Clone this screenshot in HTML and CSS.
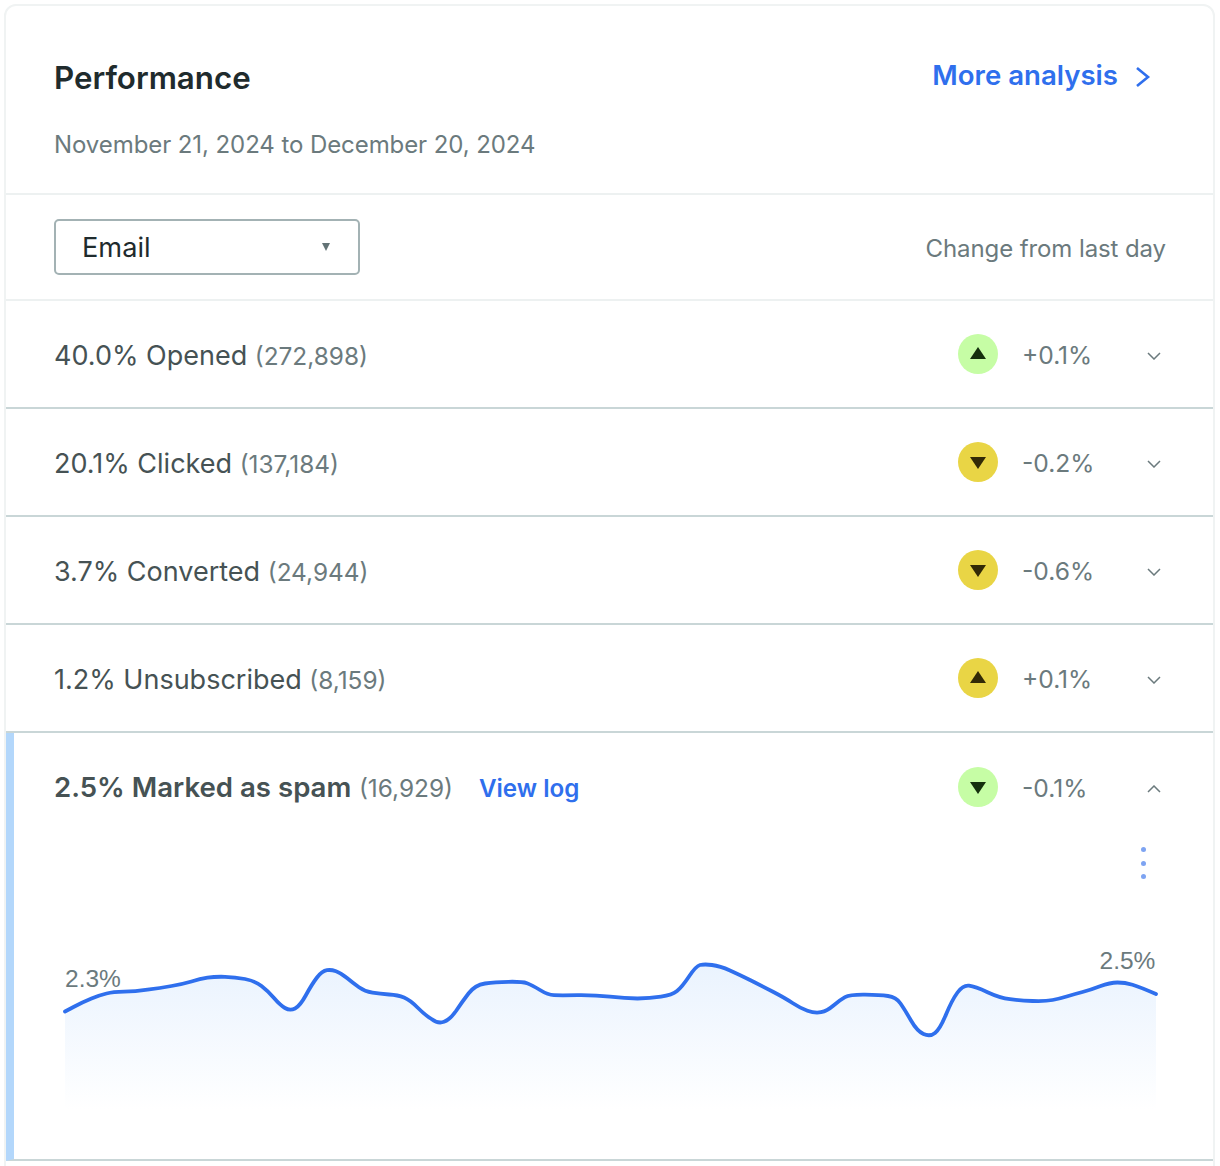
FILE: index.html
```html
<!DOCTYPE html>
<html lang="en">
<head>
<meta charset="utf-8">
<title>Performance</title>
<link rel="stylesheet" href="styles.css">
</head>
<body>
<section class="card">
  <header class="head">
    <div>
      <h1 class="title">Performance</h1>
      <p class="range">November 21, 2024 to December 20, 2024</p>
    </div>
    <a class="more" href="#">More analysis
      <svg class="more-icon" viewBox="0 0 16 22"><path d="M2 2l11 9-11 9"/></svg>
    </a>
  </header>
  <div class="filter">
    <div class="select"><span class="select-text">Email</span><svg class="select-arrow" viewBox="0 0 8 8"><path d="M0 0h8L4 8z"/></svg></div>
    <span class="filter-note">Change from last day</span>
  </div>
  <div class="row">
    <div class="label">40.0% Opened <span class="count">(272,898)</span></div>
    <span class="badge good"><svg class="up" viewBox="0 0 16 12"><path d="M8 0l8 12H0z"/></svg></span>
    <span class="delta">+0.1%</span>
    <svg class="chev" viewBox="0 0 14 8"><path d="M1 1l6 6 6-6"/></svg>
  </div>
  <div class="row">
    <div class="label">20.1% Clicked <span class="count">(137,184)</span></div>
    <span class="badge warn"><svg class="down" viewBox="0 0 16 12"><path d="M0 0h16L8 12z"/></svg></span>
    <span class="delta">-0.2%</span>
    <svg class="chev" viewBox="0 0 14 8"><path d="M1 1l6 6 6-6"/></svg>
  </div>
  <div class="row">
    <div class="label">3.7% Converted <span class="count">(24,944)</span></div>
    <span class="badge warn"><svg class="down" viewBox="0 0 16 12"><path d="M0 0h16L8 12z"/></svg></span>
    <span class="delta">-0.6%</span>
    <svg class="chev" viewBox="0 0 14 8"><path d="M1 1l6 6 6-6"/></svg>
  </div>
  <div class="row">
    <div class="label">1.2% Unsubscribed <span class="count">(8,159)</span></div>
    <span class="badge warn"><svg class="up" viewBox="0 0 16 12"><path d="M8 0l8 12H0z"/></svg></span>
    <span class="delta">+0.1%</span>
    <svg class="chev" viewBox="0 0 14 8"><path d="M1 1l6 6 6-6"/></svg>
  </div>
  <div class="expanded">
    <div class="row row-open">
      <div class="label"><strong class="strong">2.5% Marked as spam</strong> <span class="count">(16,929)</span><a class="log" href="#">View log</a></div>
      <span class="badge good"><svg class="down" viewBox="0 0 16 12"><path d="M0 0h16L8 12z"/></svg></span>
      <span class="delta">-0.1%</span>
      <svg class="chev" viewBox="0 0 14 8"><path d="M1 7l6-6 6 6"/></svg>
    </div>
    <div class="menu-line"><span class="dots"><i></i><i></i><i></i></span></div>
    <svg class="chart" viewBox="14 900 1200 259">
      <defs>
        <linearGradient id="fade" gradientUnits="userSpaceOnUse" x1="0" y1="965" x2="0" y2="1110">
          <stop class="stop-a" offset="0"/>
          <stop class="stop-b" offset="1"/>
        </linearGradient>
      </defs>
      <path class="area" d="M65 1011.5L74 1006.7Q83 1002 91.5 998.5Q100 995 106.5 993.5Q113 992 124 991.7Q135 991.5 147.5 989.7Q160 988 171.5 986Q183 984 191.5 981.5Q200 979 207.5 977.7Q215 976.5 225 976.8Q235 977 245 979Q255 981 261.5 986Q268 991 274 998Q280 1005 285 1008Q290 1011 295 1008.5Q300 1006 306 995Q312 984 317 977.5Q322 971 327 970.2Q331 969.5 336 971.2Q341 973 347 978Q353 983 359 987.2Q365 991.5 372.5 992.7Q380 994 389 994.5Q398 995 404 997.5Q410 1000 417.5 1007.5Q425 1015 431.5 1019Q438 1024 444 1021.8Q450 1019.5 456 1011Q462 1002 468.5 993.5Q475 985 485 983.5Q495 982 508.5 981.8Q522 981.5 527 983.2Q532 985 540 990Q548 995 554 995.2Q560 995.5 577.5 995.2Q595 995 610 996.7Q625 998.5 637.5 998.5Q650 998.5 661 996.7Q672 995 677 991Q682 987 689 976.5Q696 966 700 965Q705 964 712 965Q720 966 730 970.5Q740 975 750 980Q760 985 772.5 991.5Q785 998 792.5 1003Q800 1008 807.5 1010.7Q815 1013.5 821 1012.2Q827 1011 833.5 1005.5Q840 1000 845 997.2Q850 994.5 865 994.7Q880 995 888 996Q896 997 900.5 1003.5Q905 1010 911 1020.5Q917 1031 923.5 1034Q930 1037 935 1033Q940 1029 946 1014.5Q952 1000 957.5 992.5Q963 985 969 985.7Q975 986.5 987.5 992.2Q1000 998 1010 999.2Q1020 1000.5 1032.5 1001Q1045 1001.5 1052.5 1000Q1060 998.5 1067.5 996.2Q1075 994 1082.5 992Q1090 990 1100 986.2Q1110 982.5 1117.5 982.5Q1125 982.5 1132.5 984.7Q1140 987 1156 994L1156 1110L65 1110Z"/>
      <path class="line" d="M65 1011.5L74 1006.7Q83 1002 91.5 998.5Q100 995 106.5 993.5Q113 992 124 991.7Q135 991.5 147.5 989.7Q160 988 171.5 986Q183 984 191.5 981.5Q200 979 207.5 977.7Q215 976.5 225 976.8Q235 977 245 979Q255 981 261.5 986Q268 991 274 998Q280 1005 285 1008Q290 1011 295 1008.5Q300 1006 306 995Q312 984 317 977.5Q322 971 327 970.2Q331 969.5 336 971.2Q341 973 347 978Q353 983 359 987.2Q365 991.5 372.5 992.7Q380 994 389 994.5Q398 995 404 997.5Q410 1000 417.5 1007.5Q425 1015 431.5 1019Q438 1024 444 1021.8Q450 1019.5 456 1011Q462 1002 468.5 993.5Q475 985 485 983.5Q495 982 508.5 981.8Q522 981.5 527 983.2Q532 985 540 990Q548 995 554 995.2Q560 995.5 577.5 995.2Q595 995 610 996.7Q625 998.5 637.5 998.5Q650 998.5 661 996.7Q672 995 677 991Q682 987 689 976.5Q696 966 700 965Q705 964 712 965Q720 966 730 970.5Q740 975 750 980Q760 985 772.5 991.5Q785 998 792.5 1003Q800 1008 807.5 1010.7Q815 1013.5 821 1012.2Q827 1011 833.5 1005.5Q840 1000 845 997.2Q850 994.5 865 994.7Q880 995 888 996Q896 997 900.5 1003.5Q905 1010 911 1020.5Q917 1031 923.5 1034Q930 1037 935 1033Q940 1029 946 1014.5Q952 1000 957.5 992.5Q963 985 969 985.7Q975 986.5 987.5 992.2Q1000 998 1010 999.2Q1020 1000.5 1032.5 1001Q1045 1001.5 1052.5 1000Q1060 998.5 1067.5 996.2Q1075 994 1082.5 992Q1090 990 1100 986.2Q1110 982.5 1117.5 982.5Q1125 982.5 1132.5 984.7Q1140 987 1156 994"/>
      <text class="point" x="65" y="987">2.3%</text>
      <text class="point" x="1099.5" y="969">2.5%</text>
    </svg>
  </div>
</section>
</body>
</html>
```

FILE: styles.css
```css
* { box-sizing: border-box; }
html, body { height: 100%; overflow: hidden; }
body {
  margin: 0;
  padding: 4px 5px 0 4px;
  background: #fff;
  font-family: Inter, "Liberation Sans", sans-serif;
  color: #465254;
}
.card {
  width: 1211px;
  background: #fff;
  border: 2px solid #f0f3f3;
  border-radius: 12px;
  padding-bottom: 40px;
}
.head {
  height: 189px;
  display: flex;
  justify-content: space-between;
  align-items: flex-start;
  padding: 53px 62px 0 48px;
  border-bottom: 2px solid #edf1f1;
}
.title {
  margin: 0;
  font-size: 31.3px;
  line-height: 38px;
  font-weight: 600;
  color: #1f2b2d;
}
.range {
  margin: 33px 0 0;
  font-size: 24px;
  line-height: 30px;
  letter-spacing: -0.08px;
  color: #6b7a7d;
}
.more {
  display: flex;
  align-items: center;
  gap: 17px;
  margin-top: -3px;
  font-size: 27.6px;
  line-height: 38px;
  font-weight: 600;
  color: #2f6fed;
  text-decoration: none;
}
.more-icon {
  width: 16px;
  height: 22px;
  fill: none;
  stroke: #2f6fed;
  stroke-width: 2.6;
  margin-top: 3px;
}
.filter {
  height: 106px;
  display: flex;
  justify-content: space-between;
  align-items: center;
  padding: 0 47px 0 48px;
  border-bottom: 2px solid #edf1f1;
}
.select {
  width: 306px;
  height: 56px;
  display: flex;
  justify-content: space-between;
  align-items: center;
  padding: 0 28px 0 26px;
  border: 2px solid #a3b2b4;
  border-radius: 5px;
  font-size: 27.2px;
  color: #1f2b2d;
}
.select-arrow { width: 8px; height: 8px; fill: #637376; }
.filter-note {
  padding-top: 2px;
  font-size: 24px;
  letter-spacing: -0.1px;
  color: #6b7a7d;
}
.row {
  height: 108px;
  display: flex;
  align-items: center;
  padding: 0 52px 0 48px;
  border-bottom: 2px solid #c9d6d7;
}
.label {
  flex: 1;
  padding-top: 2px;
  font-size: 27px;
  color: #465254;
  white-space: nowrap;
}
.count {
  font-size: 24.4px;
  color: #6b7a7d;
}
.strong { font-size: 27.6px; font-weight: 600; }
.log {
  margin-left: 26px;
  font-size: 24.2px;
  font-weight: 600;
  color: #2f6fed;
  text-decoration: none;
}
.badge {
  width: 40px;
  height: 40px;
  border-radius: 50%;
  display: flex;
  align-items: center;
  justify-content: center;
}
.badge svg { width: 16px; height: 12px; }
.badge .up { margin-bottom: 3px; }
.badge .down { margin-top: 2px; }
.good { background: #c6fda5; }
.good svg { fill: #15300d; }
.warn { background: #e9d545; }
.warn svg { fill: #322a06; }
.delta {
  width: 149px;
  padding-left: 24px;
  padding-top: 2px;
  font-size: 24.6px;
  color: #6b7a7d;
}
.chev {
  width: 14px;
  height: 8px;
  margin-top: 3px;
  fill: none;
  stroke: #6b7a7d;
  stroke-width: 1.5;
}
.expanded {
  border-left: 8px solid #b3d7fb;
  border-bottom: 2px solid #c9d6d7;
}
.row-open {
  border-bottom: 0;
  padding-left: 40px;
  padding-right: 52px;
}
.row-open .label { padding-top: 0; }
.menu-line {
  height: 59px;
  display: flex;
  justify-content: flex-end;
  padding-right: 67px;
}
.dots {
  display: flex;
  flex-direction: column;
  gap: 8.5px;
  margin-top: 6px;
}
.dots i {
  width: 5px;
  height: 5px;
  border-radius: 50%;
  background: #7ea4f2;
}
.chart {
  display: block;
  width: 1200px;
  height: 259px;
}
.stop-a { stop-color: #eaf3fe; }
.stop-b { stop-color: #fff; }
.area { fill: url(#fade); }
.line {
  fill: none;
  stroke: #2f6fed;
  stroke-width: 3.8;
  stroke-linecap: round;
  stroke-linejoin: round;
}
.point {
  font-family: "Liberation Sans", sans-serif;
  font-size: 24.5px;
  fill: #6b7a7d;
}
```
